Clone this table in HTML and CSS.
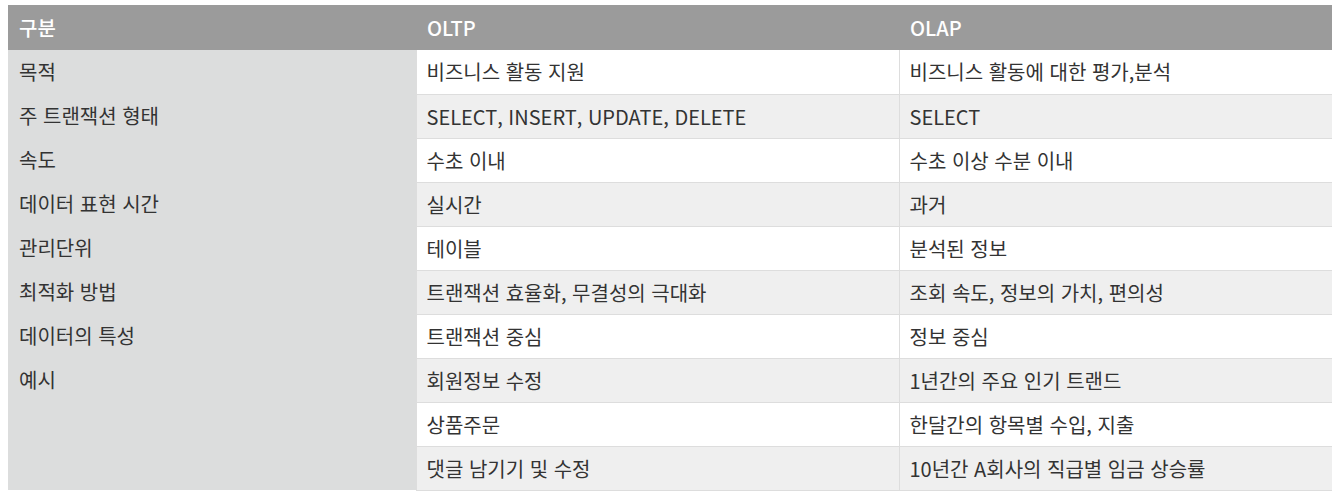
FILE: index.html
```html
<!DOCTYPE html>
<html lang="ko">
<head>
<meta charset="utf-8">
<link rel="stylesheet" href="styles.css">
</head>
<body>
<table class="cmp">
  <colgroup>
    <col class="c1"><col class="c2"><col class="c3">
  </colgroup>
  <thead>
    <tr><th>구분</th><th>OLTP</th><th>OLAP</th></tr>
  </thead>
  <tbody>
    <tr><td class="key">목적</td><td>비즈니스 활동 지원</td><td>비즈니스 활동에 대한 평가,분석</td></tr>
    <tr class="alt"><td class="key">주 트랜잭션 형태</td><td>SELECT, INSERT, UPDATE, DELETE</td><td>SELECT</td></tr>
    <tr><td class="key">속도</td><td>수초 이내</td><td>수초 이상 수분 이내</td></tr>
    <tr class="alt"><td class="key">데이터 표현 시간</td><td>실시간</td><td>과거</td></tr>
    <tr><td class="key">관리단위</td><td>테이블</td><td>분석된 정보</td></tr>
    <tr class="alt"><td class="key">최적화 방법</td><td>트랜잭션 효율화, 무결성의 극대화</td><td>조회 속도, 정보의 가치, 편의성</td></tr>
    <tr><td class="key">데이터의 특성</td><td>트랜잭션 중심</td><td>정보 중심</td></tr>
    <tr class="alt"><td class="key" rowspan="3">예시</td><td>회원정보 수정</td><td>1년간의 주요 인기 트랜드</td></tr>
    <tr><td>상품주문</td><td>한달간의 항목별 수입, 지출</td></tr>
    <tr class="alt"><td>댓글 남기기 및 수정</td><td>10년간 A회사의 직급별 임금 상승률</td></tr>
  </tbody>
</table>
</body>
</html>
```

FILE: styles.css
```css
html, body {
  background: #ffffff;
}
body {
  margin: 5px 8px 0 8px;
  font-family: "Noto Sans CJK KR", "Noto Sans", sans-serif;
  font-size: 20px;
  color: #333333;
}
.cmp {
  width: 1324px;
  border-collapse: collapse;
  table-layout: fixed;
}
.c1 { width: 408px; }
.c2 { width: 483px; }
.c3 { width: 433px; }
.cmp th {
  background: #9b9b9b;
  color: #ffffff;
  font-weight: 500;
  text-align: left;
  height: 45px;
  padding: 0 11px;
  box-sizing: border-box;
  line-height: 24px;
}
.cmp td {
  height: 44px;
  box-sizing: border-box;
  padding: 10px 10px;
  line-height: 23px;
  vertical-align: top;
  border: 1px solid #dddddd;
  border-top: none;
  background: #ffffff;
}
.cmp tr.alt td {
  background: #efefef;
}
.cmp td.key,
.cmp tr.alt td.key {
  background: #dcdddd;
  border: none;
  padding-left: 11px;
}
```
